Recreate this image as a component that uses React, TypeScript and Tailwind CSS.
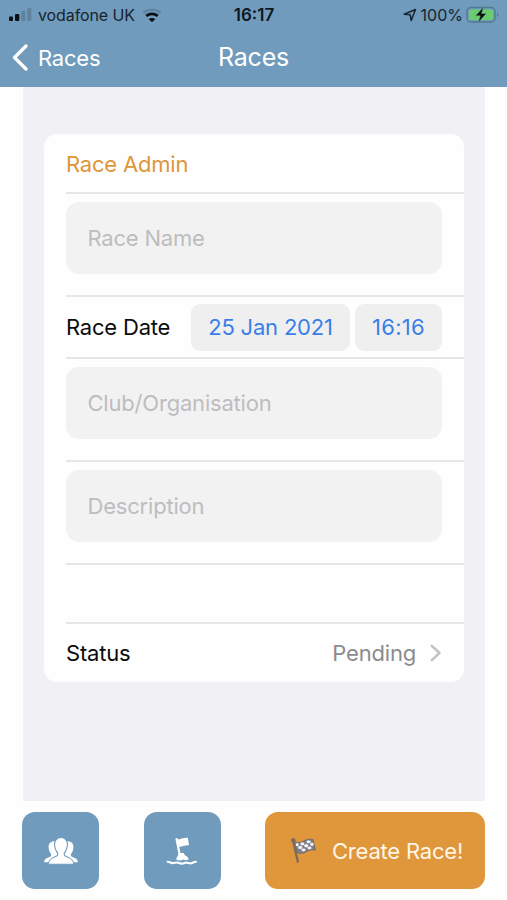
import React from 'react';

const Separator = () => <div className="ml-[22px] h-[2px] shrink-0 bg-[#e7e7e8]" />;

const Field = ({ label }: { label: string }) => (
  <div className="h-[101px] px-[22px] pt-2">
    <div className="flex h-[72px] items-center rounded-[13px] bg-[#f2f2f2] px-[21.5px] text-[#bdbdbf]">
      {label}
    </div>
  </div>
);

const Signal = () => (
  <svg width="23" height="14" viewBox="0 0 23 14">
    <rect x="0" y="8.5" width="4" height="4.5" rx="1" fill="#0b1116" />
    <rect x="6" y="6" width="4.3" height="7" rx="1" fill="#0b1116" />
    <rect x="12.3" y="3" width="4" height="10" rx="1" fill="#5d83a0" />
    <rect x="18.3" y="0" width="4" height="13" rx="1" fill="#5d83a0" />
  </svg>
);

const Wifi = () => (
  <svg width="20" height="15" viewBox="0 0 20 15" fill="none">
    <path d="M1.3 4.9C6.1 .6 13.9 .6 18.7 4.9" stroke="#5d83a0" strokeWidth="2.3" />
    <path d="M4.2 8c3.3-2.8 8.3-2.8 11.6 0" stroke="#0b1116" strokeWidth="2.7" />
    <path d="M10 14.3l-3.4-3.2c1.8-1.6 5-1.6 6.8 0z" fill="#0b1116" />
  </svg>
);

const Battery = () => (
  <svg width="33" height="18" viewBox="0 0 33 18">
    <rect x="1" y="1.5" width="28" height="14.5" rx="4" fill="none" stroke="#527a91" strokeWidth="1.4" />
    <rect x="3" y="3.5" width="24" height="10.5" rx="2" fill="#69cd6d" />
    <path d="M31 6.5c1.7.6 1.7 4 0 4.6z" fill="#527a91" />
    <path d="M17.5 1L9.5 9.8h4.8L12.2 16.5l8.2-9h-4.8z" fill="#071009" stroke="#69a996" strokeWidth=".5" />
  </svg>
);

const People = () => (
  <svg width="36" height="28" viewBox="0 0 36 28">
    <g fill="#fff">
      <path d="M12.5 4.3C8.5 3.6 5.4 6 5.6 10.2c.1 2.9 1 4.8 2.1 6.3.9 1.3.5 2.6-.7 3.3-2.4 1.2-5.6 1.5-5.9 5.4h7c.6-4.2 5-4.5 6.8-6.2 1.1-1.2-1.7-3-2.1-6.1-.4-3-1-5.8-.3-8.6z" />
      <path d="M23.5 4.3c4-.7 7.1 1.7 6.9 5.9-.1 2.9-1 4.8-2.1 6.3-.9 1.3-.5 2.6.7 3.3 2.4 1.2 5.6 1.5 5.9 5.4h-7c-.6-4.2-5-4.5-6.8-6.2-1.1-1.2 1.7-3 2.1-6.1.4-3 1-5.8.3-8.6z" />
      <path
        d="M18 .4c4.2 0 6.7 3.3 6.4 7.8-.1 3.2-1.3 5.4-2.5 7-1.2 1.7-.8 3.3.9 4.1 3.1 1.4 7.5 2.1 7.9 7.9H5.3c.4-5.8 4.8-6.5 7.9-7.9 1.7-.8 2.1-2.4.9-4.1-1.2-1.6-2.4-3.8-2.5-7C11.3 3.7 13.8.4 18 .4z"
        stroke="#709bbc"
        strokeWidth="1.1"
      />
    </g>
  </svg>
);

const Buoy = () => (
  <svg width="32" height="30" viewBox="0 0 32 30" fill="none">
    <path d="M10.6 3.2l3.1 15.5" stroke="#fff" strokeWidth="2.2" strokeLinecap="round" />
    <path d="M10.6 3c2.8 1.2 6-1.8 11.2-1.3l1.2 7.6c-4.4-.6-7.4 2.2-11 1.2z" fill="#fff" />
    <path d="M12.6 17h5.2l1.2 2.4c2 .5 3.4 2 3.6 3.8-2.2 1.6-3.9 1.1-5.4.2-2 1.3-4.6 1.4-6.9 0 .1-1.8.9-3.2 1.9-4z" fill="#fff" />
    <path
      d="M1.6 25.8c2.6 0 3.7 1.9 6.2 1.2 2.6-.9 3.8-.9 6 .3 2.2.9 3.5.2 5.2-.5 2.3-.8 3.4.7 5.6.6 1.9-.1 2.7-1.6 5.4-1.6"
      stroke="#fff"
      strokeWidth="2.1"
      strokeLinecap="round"
    />
  </svg>
);

const RaceFlag = () => (
  <svg width="28" height="27" viewBox="0 0 28 27">
    <path
      d="M4.6 4.8c4 1.8 6 .5 9-.8 3.5-1.6 6-2.2 9.4-1.5L25.4 13c-4.1-.7-6.6.2-9.6 1.9-3.3 1.7-5.4 1.8-8.7.7z"
      fill="#7e7d8a"
      stroke="#746c6c"
      strokeWidth="1"
    />
    <g fill="#f2f0f3">
      <ellipse cx="7.2" cy="7.8" rx="1.5" ry="1.8" />
      <ellipse cx="12.4" cy="6.8" rx="2" ry="1.6" />
      <ellipse cx="18.6" cy="4.8" rx="2.1" ry="1.5" />
      <ellipse cx="10.2" cy="10.4" rx="2.1" ry="1.6" />
      <ellipse cx="16.2" cy="8.7" rx="2.1" ry="1.7" />
      <ellipse cx="21.9" cy="7.2" rx="1.7" ry="1.7" />
      <ellipse cx="13.5" cy="13" rx="2.1" ry="1.4" />
      <ellipse cx="19.5" cy="11" rx="2.1" ry="1.4" />
    </g>
    <path d="M3 3.4L7.8 24.6" stroke="#7e6a5d" strokeWidth="2.3" strokeLinecap="round" />
    <circle cx="3.3" cy="3.2" r="2.2" fill="#7e6a5d" />
  </svg>
);

export default function App() {
  return (
    <div className="flex h-[900px] w-[507px] flex-col overflow-hidden bg-[#fefefe] font-['Inter',sans-serif] text-[22px] leading-7 tracking-[-0.2px] text-[#0c0c0c]">
      <header className="h-[87px] shrink-0 bg-[#709bbc]">
        <div className="grid h-[30px] grid-cols-[1fr_auto_1fr] items-center pl-[9px] pr-2 text-base leading-5 tracking-normal text-[#17242e]">
          <div className="flex items-center">
            <Signal />
            <span className="ml-[6px] mr-[7px] tracking-[-0.1px]">vodafone UK</span>
            <Wifi />
          </div>
          <span className="text-[17px] font-semibold text-[#10181f]">16:17</span>
          <div className="flex items-center justify-end">
            <svg width="14" height="14" viewBox="0 0 14 14" fill="none" stroke="#17242e" strokeWidth="1.5" strokeLinejoin="round">
              <path d="M1.2 6.3L12.5 1.5 8.2 12.5 7.2 6.8z" />
            </svg>
            <span className="ml-1 mr-[3px]">100%</span>
            <Battery />
          </div>
        </div>
        <div className="grid h-[54px] grid-cols-[1fr_auto_1fr] items-center pl-3 pr-3 text-white">
          <div className="flex items-center gap-[10px] pt-px">
            <svg width="16" height="27" viewBox="0 0 16 27" fill="none">
              <path d="M14 2L2.5 13.5 14 25" stroke="#fff" strokeWidth="3.2" strokeLinecap="round" strokeLinejoin="round" />
            </svg>
            <span>Races</span>
          </div>
          <h1 className="text-[25px]">Races</h1>
        </div>
      </header>

      <main className="ml-[23px] h-[714px] w-[462px] shrink-0 bg-[#f1f0f5] px-[21px] pt-[47px]">
        <section className="flex h-[548px] flex-col rounded-[13px] bg-[#fefefe]">
          <div className="flex h-[58px] items-center px-[22px] pt-px text-[#df9638]">Race Admin</div>
          <Separator />
          <Field label="Race Name" />
          <Separator />
          <div className="flex h-[60px] items-center px-[22px]">
            <span className="flex-1">Race Date</span>
            <button className="h-[47px] w-[159px] rounded-[9px] bg-[#efeff0] text-[#397fe7]">25 Jan 2021</button>
            <button className="ml-[5px] h-[47px] w-[87px] rounded-[9px] bg-[#efeff0] tracking-[0.3px] text-[#397fe7]">16:16</button>
          </div>
          <Separator />
          <Field label="Club/Organisation" />
          <Separator />
          <Field label="Description" />
          <Separator />
          <div className="h-[57px]" />
          <Separator />
          <div className="flex flex-1 items-center px-[22px]">
            <span className="flex-1">Status</span>
            <span className="text-[#8b8b8d]">Pending</span>
            <svg className="ml-[14px]" width="12" height="18" viewBox="0 0 12 18" fill="none">
              <path d="M1.8 1.8L9.5 9l-7.7 7.2" stroke="#c2c2c5" strokeWidth="2.4" strokeLinecap="round" strokeLinejoin="round" />
            </svg>
          </div>
        </section>
      </main>

      <footer className="flex px-[22px] pt-[11px]">
        <button aria-label="Competitors" className="flex h-[77px] w-[77px] shrink-0 items-center justify-center rounded-[13px] bg-[#709bbc]">
          <People />
        </button>
        <button aria-label="Course marks" className="ml-[44.5px] flex h-[77px] w-[77px] shrink-0 items-center justify-center rounded-[13px] bg-[#709bbc]">
          <Buoy />
        </button>
        <button className="ml-[44.5px] flex h-[77px] w-[220px] shrink-0 items-center rounded-[13px] bg-[#e0963a] pl-[25px] text-[#fff6e6]">
          <RaceFlag />
          <span className="ml-[14px] whitespace-nowrap">Create Race!</span>
        </button>
      </footer>
    </div>
  );
}
